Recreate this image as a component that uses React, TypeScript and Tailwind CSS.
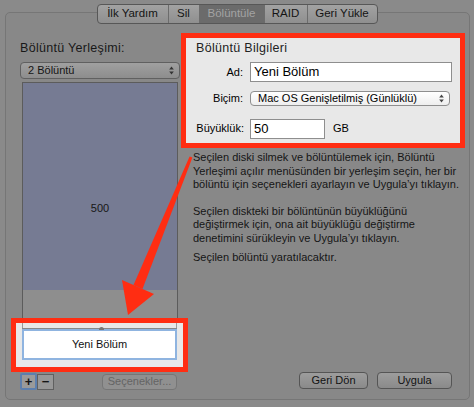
import React from 'react';

const font = { fontFamily: '"Liberation Sans", Arial, sans-serif' };

function UpDown({ color = '#333' }: { color?: string }) {
  return (
    <svg width="5" height="9" viewBox="0 0 5 9" className="shrink-0">
      <path d="M2.5 0.5 L4.8 3.5 L0.2 3.5 Z" fill={color} />
      <path d="M2.5 8.5 L4.8 5.5 L0.2 5.5 Z" fill={color} />
    </svg>
  );
}

const tabs = [
  { label: 'İlk Yardım', w: 'w-[70px]' },
  { label: 'Sil', w: 'w-[31px]' },
  { label: 'Bölüntüle', w: 'w-[65px]', active: true },
  { label: 'RAID', w: 'w-[43px]' },
  { label: 'Geri Yükle', w: 'w-[70px]' },
];

function TabBar() {
  return (
    <div className="relative z-10 flex justify-center pt-[4px]">
      <div className="flex h-[20px] overflow-hidden rounded-[4px] border border-[#575757] bg-gradient-to-b from-[#a2a2a2] to-[#8f8f8f]">
        {tabs.map((t, i) => (
          <div
            key={t.label}
            className={
              'flex items-center justify-center text-[11.5px] ' +
              t.w +
              (i > 0 ? ' border-l border-[#6c6c6c]' : '') +
              (t.active ? ' bg-[#6b6b6b] text-[#a3a3a3]' : ' text-[#141414]')
            }
          >
            {t.label}
          </div>
        ))}
      </div>
    </div>
  );
}

function LeftColumn() {
  return (
    <div className="ml-[14px] flex w-[160px] flex-col">
      <div className="mt-[27px] text-[12.5px] leading-[16px] tracking-[0.3px] text-[#181818]">Bölüntü Yerleşimi:</div>
      <div className="mt-[6px] flex h-[17px] items-center justify-between rounded-[4px] border border-[#606060] bg-gradient-to-b from-[#a0a0a0] to-[#8d8d8d] pl-[7px] pr-[5px] text-[11px] text-[#151515]">
        <span>2 Bölüntü</span>
        <UpDown color="#333" />
      </div>
      <div className="mx-[2px] mt-[3px] flex h-[236px] flex-col border-x border-t border-[#5c5c5c]">
        <div className="flex h-[207px] justify-center bg-[#767b93] pt-[117px] text-[11px] text-[#161616]">
          500
        </div>
        <div className="flex-1 bg-[#8e8e8e]" />
      </div>
      <div className="-ml-[9px] h-[54px] w-[177px] border-[5px] border-[#ff2d12] bg-[#e8e8e8] px-[6px]">
        <div className="relative h-[6px] border-x border-[#9a9a9a]">
          <div className="absolute bottom-0 left-[-1px] right-[-1px] h-px bg-[#888]" />
          <div className="absolute bottom-[-1px] left-[76px] h-[3px] w-[5px] rounded-t-full bg-[#777]" />
        </div>
        <div className="flex h-[31px] items-center justify-center border-2 border-[#8fb4e0] bg-white text-[11px] text-[#111]">
          Yeni Bölüm
        </div>
      </div>
      <div className="mt-[1px] flex items-center">
        <div className="flex h-[17px] w-[17px] items-center justify-center rounded-[2px] border-2 border-[#5d7fae] bg-[#9a9a9a] text-[13px] font-bold leading-none text-[#151515]">
          +
        </div>
        <div className="flex h-[16px] w-[17px] items-center justify-center border border-[#606060] bg-[#979797] text-[13px] font-bold leading-none text-[#151515]">
          −
        </div>
        <div className="ml-auto mr-[3px] flex h-[16px] w-[75px] items-center justify-center rounded-[4px] border border-[#767676] bg-[#909090] text-[11px] text-[#646464]">
          Seçenekler...
        </div>
      </div>
    </div>
  );
}

function RightColumn() {
  return (
    <div className="ml-[1px] flex w-[284px] flex-col pb-[10px]">
      <div className="mt-[20px] h-[115px] border-[5px] border-[#ff2d12] bg-[#e8e8e8] text-[#000]">
        <div className="pl-[10px] pt-[3px] text-[12.5px] leading-[15px] tracking-[0.3px] text-[#222]">Bölüntü Bilgileri</div>
        <div className="mt-[6px] flex items-center">
          <div className="w-[58px] pr-[1px] text-right text-[11px]">Ad:</div>
          <div className="ml-[6px] flex h-[20px] w-[202px] items-center border border-[#8e8e8e] bg-white pl-[3px] text-[13px]">
            Yeni Bölüm
          </div>
        </div>
        <div className="mt-[8px] flex items-center">
          <div className="w-[58px] pr-[1px] text-right text-[11px]">Biçim:</div>
          <div className="ml-[6px] flex h-[15px] w-[200px] items-center justify-between rounded-[4px] border border-[#8e8e8e] bg-gradient-to-b from-white to-[#eeeeee] pl-[7px] pr-[5px] text-[11px]">
            <span>Mac OS Genişletilmiş (Günlüklü)</span>
            <UpDown color="#444" />
          </div>
        </div>
        <div className="mt-[12px] flex items-center">
          <div className="w-[58px] text-right text-[11px]">Büyüklük:</div>
          <div className="ml-[6px] flex h-[20px] w-[75px] items-center border border-[#8e8e8e] bg-white pl-[3px] text-[13px]">
            50
          </div>
          <div className="ml-[8px] text-[11px]">GB</div>
        </div>
      </div>
      <div className="mt-[3px] pl-[12px] text-[11px] leading-[13.5px] text-[#151515]">
        <p>
          Seçilen diski silmek ve bölüntülemek için, Bölüntü
          <br />
          Yerleşimi açılır menüsünden bir yerleşim seçin, her bir
          <br />
          bölüntü için seçenekleri ayarlayın ve Uygula’yı tıklayın.
        </p>
        <p className="mt-[13px]">
          Seçilen diskteki bir bölüntünün büyüklüğünü
          <br />
          değiştirmek için, ona ait büyüklüğü değiştirme
          <br />
          denetimini sürükleyin ve Uygula’yı tıklayın.
        </p>
        <p className="mt-[6px]">Seçilen bölüntü yaratılacaktır.</p>
      </div>
      <div className="mt-auto flex justify-end gap-[9px] pr-[13px]">
        <div className="flex h-[17px] w-[69px] items-center justify-center rounded-[4px] border border-[#555] bg-gradient-to-b from-[#9d9d9d] to-[#8a8a8a] text-[11px] text-[#121212]">
          Geri Dön
        </div>
        <div className="flex h-[17px] w-[75px] items-center justify-center rounded-[4px] border border-[#555] bg-gradient-to-b from-[#9d9d9d] to-[#8a8a8a] text-[11px] text-[#121212]">
          Uygula
        </div>
      </div>
    </div>
  );
}

function Arrow() {
  return (
    <svg
      className="pointer-events-none absolute left-0 top-0"
      width="474"
      height="407"
      viewBox="0 0 474 407"
    >
      <g fill="#ff2d12">
        <polygon points="189.6,156.4 192.4,157.6 142.5,289 133.5,285" />
        <polygon points="122,280 154,294 128,315" />
      </g>
    </svg>
  );
}

export default function App() {
  return (
    <div className="relative h-[407px] w-[474px] overflow-hidden bg-[#8a8a8a]" style={font}>
      <TabBar />
      <div className="-mt-[12px] ml-[5px] flex h-[388px] w-[465px] rounded-[5px] border border-[#767676] bg-[#888888]">
        <LeftColumn />
        <RightColumn />
      </div>
      <Arrow />
    </div>
  );
}
